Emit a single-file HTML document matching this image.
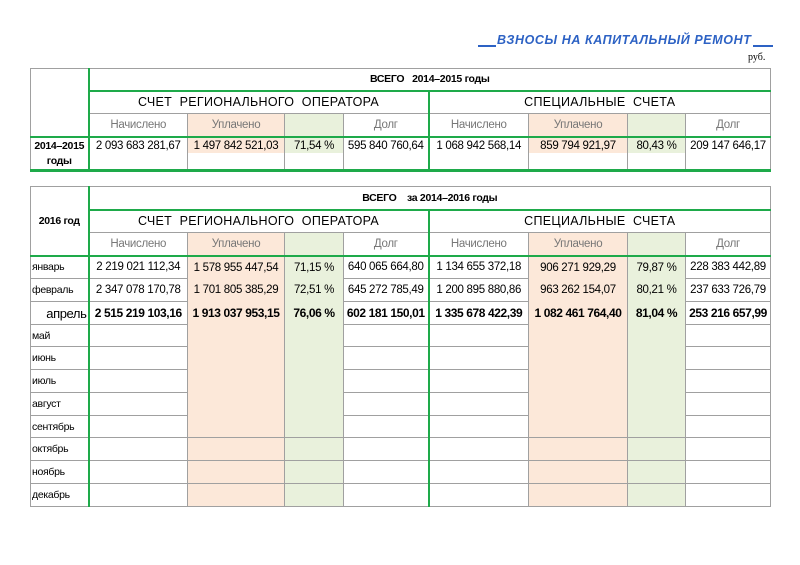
<!DOCTYPE html>
<html><head><meta charset="utf-8"><style>
body{margin:0;background:#fff;width:800px;height:565px;position:relative;overflow:hidden;font-family:"Liberation Sans",Arial,sans-serif;}
.title{position:absolute;left:497px;top:33px;width:252px;font-size:12.5px;font-style:italic;font-weight:bold;color:#2d62c4;letter-spacing:0.6px;white-space:nowrap;text-align:center;line-height:14px;}
.ul{position:absolute;top:45px;height:2px;background:#2d62c4;}
.rub{position:absolute;left:748px;top:52px;font-family:"Liberation Serif",serif;font-size:10px;}
table{position:absolute;left:30px;border-collapse:collapse;table-layout:fixed;width:740px;}
td{border:1px solid #a0a0a0;padding:0;font-size:11.5px;text-align:center;white-space:nowrap;overflow:hidden;letter-spacing:-0.3px;}
.o{background:#fce8d9;}
.g{background:#e9f1dc;}
.h td{color:#777;}
.gl{border-left:2px solid #1eaa4a;}
.gb td{border-bottom:2px solid #1eaa4a;}
.sec{font-size:12.5px;letter-spacing:0.3px;}
.m{text-align:left;font-size:10.5px;padding-left:1px;}
.nb td.o,.nb td.g{border-bottom:hidden;}
.b td{font-weight:bold;font-size:12px;letter-spacing:-0.4px;}
</style></head><body>
<div class="ul" style="left:478px;width:18px"></div>
<div class="title">ВЗНОСЫ НА КАПИТАЛЬНЫЙ РЕМОНТ</div>
<div class="ul" style="left:753px;width:20px"></div>
<div class="rub">руб.</div>

<table style="top:68px">
<colgroup><col style="width:58px"><col style="width:99px"><col style="width:97px"><col style="width:59px"><col style="width:85px"><col style="width:100px"><col style="width:99px"><col style="width:58px"><col style="width:85px"></colgroup>
<tr style="height:22px"><td rowspan="3" style="border-bottom:2px solid #1eaa4a"></td><td colspan="8" class="gl" style="border-bottom:2px solid #1eaa4a;font-weight:bold;font-size:10.5px">ВСЕГО&nbsp;&nbsp; 2014–2015 годы</td></tr>
<tr style="height:23px"><td colspan="4" class="gl sec">СЧЕТ&nbsp; РЕГИОНАЛЬНОГО&nbsp; ОПЕРАТОРА</td><td colspan="4" class="gl sec">СПЕЦИАЛЬНЫЕ&nbsp; СЧЕТА</td></tr>
<tr class="h gb" style="height:23px"><td class="gl">Начислено</td><td class="o">Уплачено</td><td class="g"></td><td>Долг</td><td class="gl">Начислено</td><td class="o">Уплачено</td><td class="g"></td><td>Долг</td></tr>
<tr style="height:31px;vertical-align:top"><td style="font-weight:bold;font-size:10.5px;line-height:15px;border-bottom:3px solid #1eaa4a;padding-top:1px">2014–2015<br>годы</td>
<td class="gl" style="border-bottom:3px solid #1eaa4a;padding-top:2px">2 093 683 281,67</td>
<td style="border-bottom:3px solid #1eaa4a;background:linear-gradient(#fce8d9 0 15px,#fff 15px);padding-top:2px">1 497 842 521,03</td>
<td style="border-bottom:3px solid #1eaa4a;background:linear-gradient(#e9f1dc 0 15px,#fff 15px);padding-top:2px">71,54 %</td>
<td style="border-bottom:3px solid #1eaa4a;padding-top:2px">595 840 760,64</td>
<td class="gl" style="border-bottom:3px solid #1eaa4a;padding-top:2px">1 068 942 568,14</td>
<td style="border-bottom:3px solid #1eaa4a;background:linear-gradient(#fce8d9 0 15px,#fff 15px);padding-top:2px">859 794 921,97</td>
<td style="border-bottom:3px solid #1eaa4a;background:linear-gradient(#e9f1dc 0 15px,#fff 15px);padding-top:2px">80,43 %</td>
<td style="border-bottom:3px solid #1eaa4a;padding-top:2px">209 147 646,17</td></tr>
</table>

<table style="top:186px">
<colgroup><col style="width:58px"><col style="width:99px"><col style="width:97px"><col style="width:59px"><col style="width:85px"><col style="width:100px"><col style="width:99px"><col style="width:58px"><col style="width:85px"></colgroup>
<tr style="height:23px"><td rowspan="3" style="border-bottom:2px solid #1eaa4a;font-weight:bold;font-size:10.5px">2016 год</td><td colspan="8" class="gl" style="border-bottom:2px solid #1eaa4a;font-weight:bold;font-size:10.5px">ВСЕГО&nbsp;&nbsp;&nbsp; за 2014–2016 годы</td></tr>
<tr style="height:23px"><td colspan="4" class="gl sec">СЧЕТ&nbsp; РЕГИОНАЛЬНОГО&nbsp; ОПЕРАТОРА</td><td colspan="4" class="gl sec">СПЕЦИАЛЬНЫЕ&nbsp; СЧЕТА</td></tr>
<tr class="h gb" style="height:23px"><td class="gl">Начислено</td><td class="o">Уплачено</td><td class="g"></td><td>Долг</td><td class="gl">Начислено</td><td class="o">Уплачено</td><td class="g"></td><td>Долг</td></tr>
<tr class="nb" style="height:23px"><td class="m">январь</td><td class="gl">2 219 021 112,34</td><td class="o">1 578 955 447,54</td><td class="g">71,15 %</td><td>640 065 664,80</td><td class="gl">1 134 655 372,18</td><td class="o">906 271 929,29</td><td class="g">79,87 %</td><td>228 383 442,89</td></tr>
<tr class="nb" style="height:23px"><td class="m">февраль</td><td class="gl">2 347 078 170,78</td><td class="o">1 701 805 385,29</td><td class="g">72,51 %</td><td>645 272 785,49</td><td class="gl">1 200 895 880,86</td><td class="o">963 262 154,07</td><td class="g">80,21 %</td><td>237 633 726,79</td></tr>
<tr class="nb b" style="height:23px"><td style="text-align:right;font-weight:normal;font-size:13px;padding-right:1px">апрель</td><td class="gl">2 515 219 103,16</td><td class="o">1 913 037 953,15</td><td class="g">76,06 %</td><td>602 181 150,01</td><td class="gl">1 335 678 422,39</td><td class="o">1 082 461 764,40</td><td class="g">81,04 %</td><td>253 216 657,99</td></tr>
<tr class="nb" style="height:22px"><td class="m">май</td><td class="gl"></td><td class="o"></td><td class="g"></td><td></td><td class="gl"></td><td class="o"></td><td class="g"></td><td></td></tr>
<tr class="nb" style="height:23px"><td class="m">июнь</td><td class="gl"></td><td class="o"></td><td class="g"></td><td></td><td class="gl"></td><td class="o"></td><td class="g"></td><td></td></tr>
<tr class="nb" style="height:23px"><td class="m">июль</td><td class="gl"></td><td class="o"></td><td class="g"></td><td></td><td class="gl"></td><td class="o"></td><td class="g"></td><td></td></tr>
<tr class="nb" style="height:23px"><td class="m">август</td><td class="gl"></td><td class="o"></td><td class="g"></td><td></td><td class="gl"></td><td class="o"></td><td class="g"></td><td></td></tr>
<tr style="height:22px"><td class="m">сентябрь</td><td class="gl"></td><td class="o"></td><td class="g"></td><td></td><td class="gl"></td><td class="o"></td><td class="g"></td><td></td></tr>
<tr style="height:23px"><td class="m">октябрь</td><td class="gl"></td><td class="o"></td><td class="g"></td><td></td><td class="gl"></td><td class="o"></td><td class="g"></td><td></td></tr>
<tr style="height:23px"><td class="m">ноябрь</td><td class="gl"></td><td class="o"></td><td class="g"></td><td></td><td class="gl"></td><td class="o"></td><td class="g"></td><td></td></tr>
<tr style="height:23px"><td class="m">декабрь</td><td class="gl"></td><td class="o"></td><td class="g"></td><td></td><td class="gl"></td><td class="o"></td><td class="g"></td><td></td></tr>
</table>
</body></html>
